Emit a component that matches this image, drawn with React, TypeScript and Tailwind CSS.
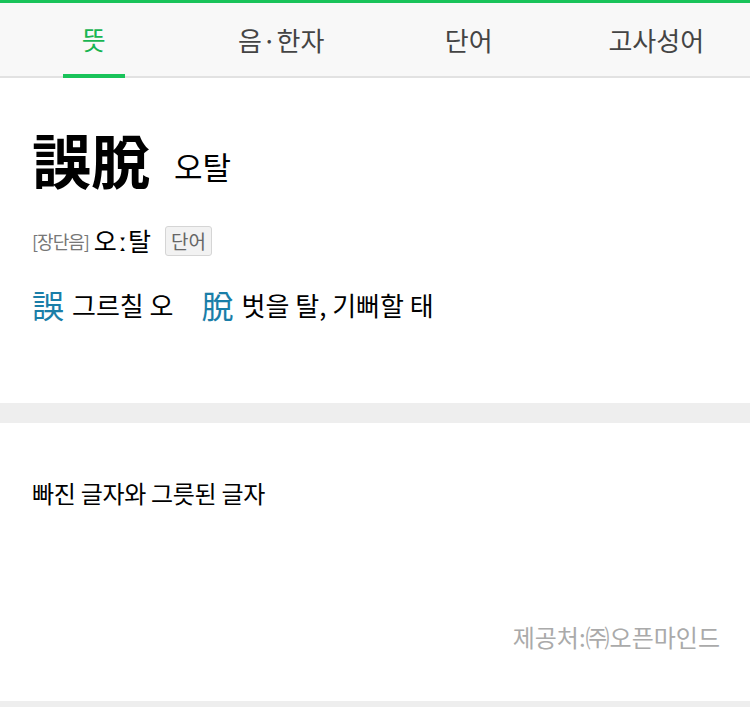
const font = { fontFamily: '"Noto Sans CJK KR", "Noto Sans", sans-serif' }

const tabs = ["뜻", "음·한자", "단어", "고사성어"]

export default function App() {
  return (
    <div className="w-[750px] h-[707px] bg-white overflow-hidden" style={font}>
      <div className="h-[3px] bg-[#19c35a]" />
      <div className="flex h-[75px] bg-[#f8f8f8] border-b-2 border-[#e2e2e2]">
        {tabs.map((t, i) => (
          <div key={t} className="flex-1 flex justify-center">
            <div
              className={
                i === 0
                  ? "relative flex items-center px-[19px] text-[26px] text-[#19b552] border-b-[4px] border-[#19c35a] mb-[-2px]"
                  : "flex items-center px-4 text-[26px] text-[#444]"
              }
            >
              {t}
            </div>
          </div>
        ))}
      </div>

      <div className="px-8 pt-[46px] h-[325px]">
        <div className="flex items-end gap-[24px]">
          <div className="text-[59px] font-bold leading-[70px] text-black">誤脫</div>
          <div className="text-[31px] leading-[40px] mb-[8px] text-black">오탈</div>
        </div>
        <div className="flex items-center mt-[30px] h-[34px]">
          <span className="text-[18px] text-[#777] tracking-[-1px]">[장단음]</span>
          <span className="text-[25px] text-black ml-[5px]">
            오<span className="font-bold mx-[2px]">ː</span>탈
          </span>
          <span className="ml-[14px] text-[19px] text-[#666] bg-[#f2f2f2] border border-[#d5d5d5] rounded-[3px] px-[5px] leading-[28px]">단어</span>
        </div>
        <div className="flex items-center mt-[22px] text-[26px] text-black">
          <span className="text-[32px] text-[#1a7ea8]">誤</span>
          <span className="ml-[8px]">그르칠 오</span>
          <span className="ml-[28px] text-[32px] text-[#1a7ea8]">脫</span>
          <span className="ml-[8px]">벗을 탈, 기뻐할 태</span>
        </div>
      </div>

      <div className="h-[20px] bg-[#eeeeee]" />

      <div className="px-8 pt-[52px] h-[278px] flex flex-col">
        <div className="text-[24px] text-black tracking-[-0.3px]">빠진 글자와 그릇된 글자</div>
        <div className="mt-auto mb-[46px] self-end text-[24px] text-[#aaaaaa] mr-[-2px]">제공처:㈜오픈마인드</div>
      </div>
      <div className="h-[10px] bg-[#eeeeee]" />
    </div>
  )
}
